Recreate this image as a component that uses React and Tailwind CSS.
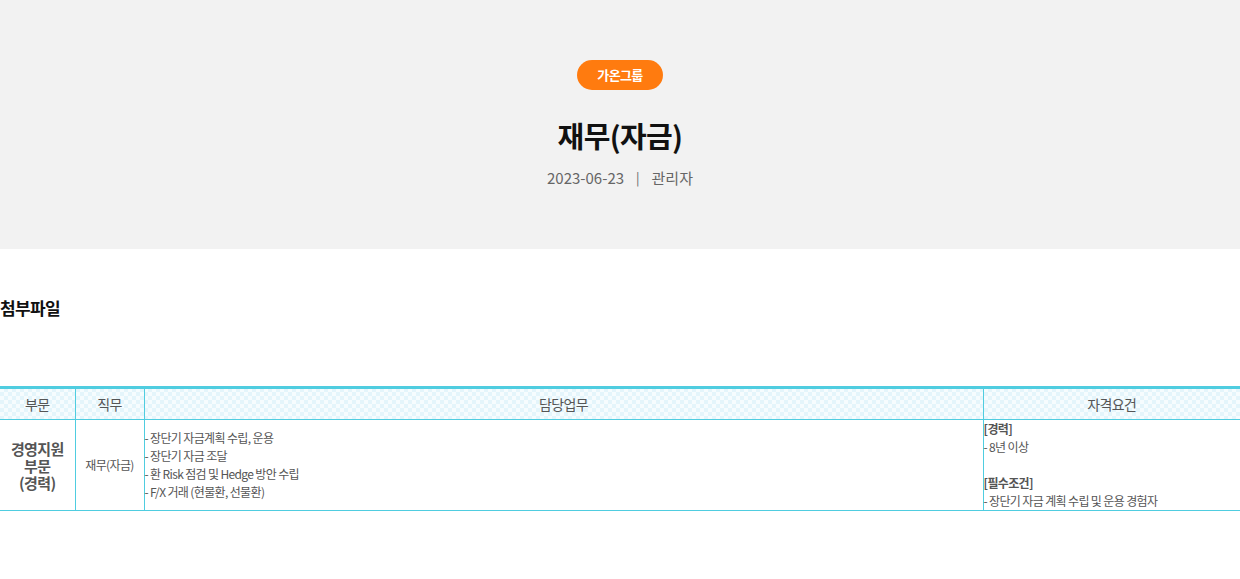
import React from "react";

const duties = [
  "- 장단기 자금계획 수립, 운용",
  "- 장단기 자금 조달",
  "- 환 Risk 점검 및 Hedge 방안 수립",
  "- F/X 거래 (현물환, 선물환)",
];

export default function App() {
  return (
    <div className="min-h-[579px] bg-white font-['Noto_Sans_CJK_KR','Noto_Sans',sans-serif] tracking-[-0.04em] text-[#222]">
      {/* 상단 헤더 */}
      <section className="flex h-[249px] flex-col items-center bg-[#f2f2f2] pt-[60px]">
        <span className="flex h-[30px] w-[86px] items-center justify-center rounded-full bg-[#ff7b0f] text-[13px] font-bold text-white">
          가온그룹
        </span>
        <h1 className="mt-[25px] text-[29px] font-bold leading-[40px] text-[#111]">재무(자금)</h1>
        <div className="mt-[13px] flex items-center text-[15px] leading-[20px] tracking-normal text-[#666]">
          <span>2023-06-23</span>
          <span className="mx-[12px] text-[13px]">|</span>
          <span>관리자</span>
        </div>
      </section>

      {/* 첨부파일 */}
      <h2 className="mt-[47px] text-[17px] font-bold leading-[24px] text-[#111]">첨부파일</h2>

      {/* 표 */}
      <table className="mt-[66px] w-full border-collapse border-t-[3px] border-b border-[#4fcde0] text-[#555]">
        <thead>
          <tr className="h-[32px] border-b border-[#4fcde0] bg-[#f0f9fd] bg-[repeating-conic-gradient(#e4f5fb_0_25%,#f6fcfe_0_50%)] bg-[length:8px_8px] text-[14px] font-normal">
            <th className="w-[75px] border-r border-[#4fcde0] font-normal">부문</th>
            <th className="w-[69px] border-r border-[#4fcde0] font-normal">직무</th>
            <th className="w-[839px] border-r border-[#4fcde0] font-normal">담당업무</th>
            <th className="font-normal">자격요건</th>
          </tr>
        </thead>
        <tbody>
          <tr className="h-[90px] align-middle">
            <td className="border-r border-[#4fcde0] text-center text-[15px] font-bold leading-[17px] text-[#555]">
              <div>경영지원</div>
              <div>부문</div>
              <div>(경력)</div>
            </td>
            <td className="border-r border-[#4fcde0] text-center text-[12px] text-[#555]">재무(자금)</td>
            <td className="border-r border-[#4fcde0] text-[12px] leading-[18px] text-[#555]">
              {duties.map((d) => (
                <div key={d}>{d}</div>
              ))}
            </td>
            <td className="text-[12px] leading-[18px] text-[#555]">
              <div className="font-bold">[경력]</div>
              <div>- 8년 이상</div>
              <div>&nbsp;</div>
              <div className="font-bold">[필수조건]</div>
              <div>- 장단기 자금 계획 수립 및 운용 경험자</div>
            </td>
          </tr>
        </tbody>
      </table>
    </div>
  );
}
